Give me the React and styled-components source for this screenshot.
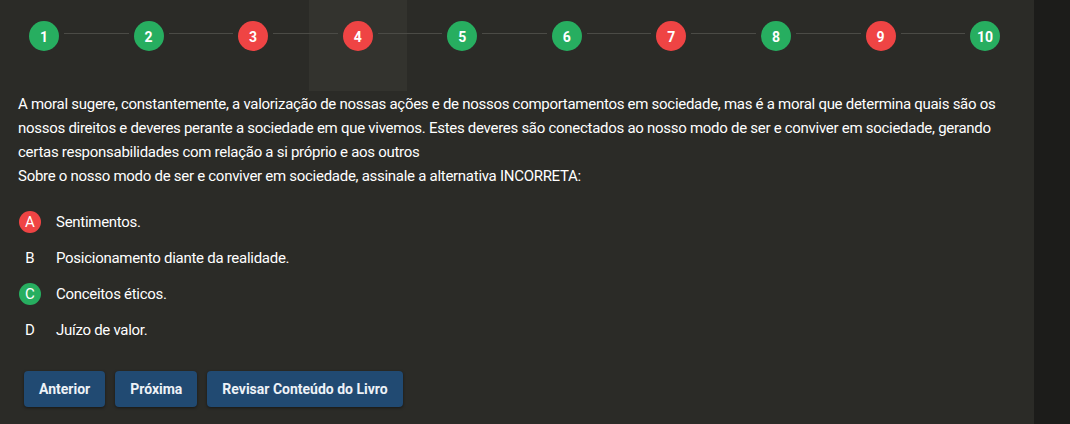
import React from "react";
import styled, { createGlobalStyle } from "styled-components";

const GlobalStyle = createGlobalStyle`
  body {
    margin: 0;
    background: #1c1c1a;
    font-family: Roboto, "Liberation Sans", sans-serif;
  }
`;

const Page = styled.div`
  display: flex;
  min-height: 424px;
`;

const Panel = styled.main`
  width: 1034px;
  background: #2b2b27;
  color: #ffffff;
`;

const Stepper = styled.div`
  position: relative;
  isolation: isolate;
  display: flex;
  align-items: flex-start;
  box-sizing: border-box;
  height: 91px;
  padding: 21px 34px 0 29px;
`;

const stepColors = {
  right: "#27ae60",
  wrong: "#ef4444",
};

const StepCircle = styled.div`
  position: relative;
  flex: 0 0 30px;
  height: 30px;
  border-radius: 50%;
  background: ${(p) => stepColors[p.status]};
  color: #fff;
  font-weight: 700;
  font-size: 14px;
  display: flex;
  align-items: center;
  justify-content: center;
  padding-top: 2px;
  box-sizing: border-box;

  &::before {
    content: "";
    display: ${(p) => (p.active ? "block" : "none")};
    position: absolute;
    top: -21px;
    left: -34px;
    width: 98px;
    height: 91px;
    background: #33332e;
    z-index: -1;
  }
`;

const Connector = styled.div`
  flex: 1;
  height: 1px;
  margin: 12px 5px 0;
  background: #4b4b46;
`;

const Question = styled.p`
  margin: 1px 0 0;
  padding: 0 18px;
  font-size: 15px;
  letter-spacing: -0.28px;
  line-height: 24px;
  white-space: nowrap;
`;

const Options = styled.ul`
  list-style: none;
  margin: 16px 0 0;
  padding: 0 0 0 19px;
`;

const Option = styled.li`
  display: flex;
  align-items: center;
  gap: 15px;
  height: 36px;
  font-size: 15px;
  letter-spacing: -0.28px;
`;

const letterColors = {
  wrong: "#ef4444",
  right: "#27ae60",
  none: "transparent",
};

const Letter = styled.span`
  width: 22px;
  height: 22px;
  border-radius: 50%;
  background: ${(p) => letterColors[p.mark]};
  display: flex;
  align-items: center;
  justify-content: center;
  font-size: 15px;
  letter-spacing: 0;
`;

const Actions = styled.div`
  display: flex;
  gap: 10px;
  margin-top: 23px;
  padding-left: 24px;
`;

const Button = styled.button`
  height: 36px;
  padding: 0 15px;
  border: none;
  border-radius: 4px;
  background: #214a72;
  color: #eef2f7;
  font-family: Roboto, "Liberation Sans", sans-serif;
  font-size: 14px;
  font-weight: 700;
  box-shadow: 0 1px 3px rgba(0, 0, 0, 0.45);
  cursor: pointer;
`;

const steps = [
  "right", "right", "wrong", "wrong", "right",
  "right", "wrong", "right", "wrong", "right",
];

const options = [
  { letter: "A", text: "Sentimentos.", mark: "wrong" },
  { letter: "B", text: "Posicionamento diante da realidade.", mark: "none" },
  { letter: "C", text: "Conceitos éticos.", mark: "right" },
  { letter: "D", text: "Juízo de valor.", mark: "none" },
];

export default function App() {
  return (
    <Page>
      <GlobalStyle />
      <Panel>
        <Stepper>
          {steps.map((status, i) => (
            <React.Fragment key={i}>
              {i > 0 && <Connector />}
              <StepCircle status={status} active={i === 3}>
                {i + 1}
              </StepCircle>
            </React.Fragment>
          ))}
        </Stepper>
        <Question>
          A moral sugere, constantemente, a valorização de nossas ações e de nossos comportamentos em sociedade, mas é a moral que determina quais são os
          <br />
          nossos direitos e deveres perante a sociedade em que vivemos. Estes deveres são conectados ao nosso modo de ser e conviver em sociedade, gerando
          <br />
          certas responsabilidades com relação a si próprio e aos outros
          <br />
          Sobre o nosso modo de ser e conviver em sociedade, assinale a alternativa INCORRETA:
        </Question>
        <Options>
          {options.map((o) => (
            <Option key={o.letter}>
              <Letter mark={o.mark}>{o.letter}</Letter>
              {o.text}
            </Option>
          ))}
        </Options>
        <Actions>
          <Button>Anterior</Button>
          <Button>Próxima</Button>
          <Button>Revisar Conteúdo do Livro</Button>
        </Actions>
      </Panel>
    </Page>
  );
}
